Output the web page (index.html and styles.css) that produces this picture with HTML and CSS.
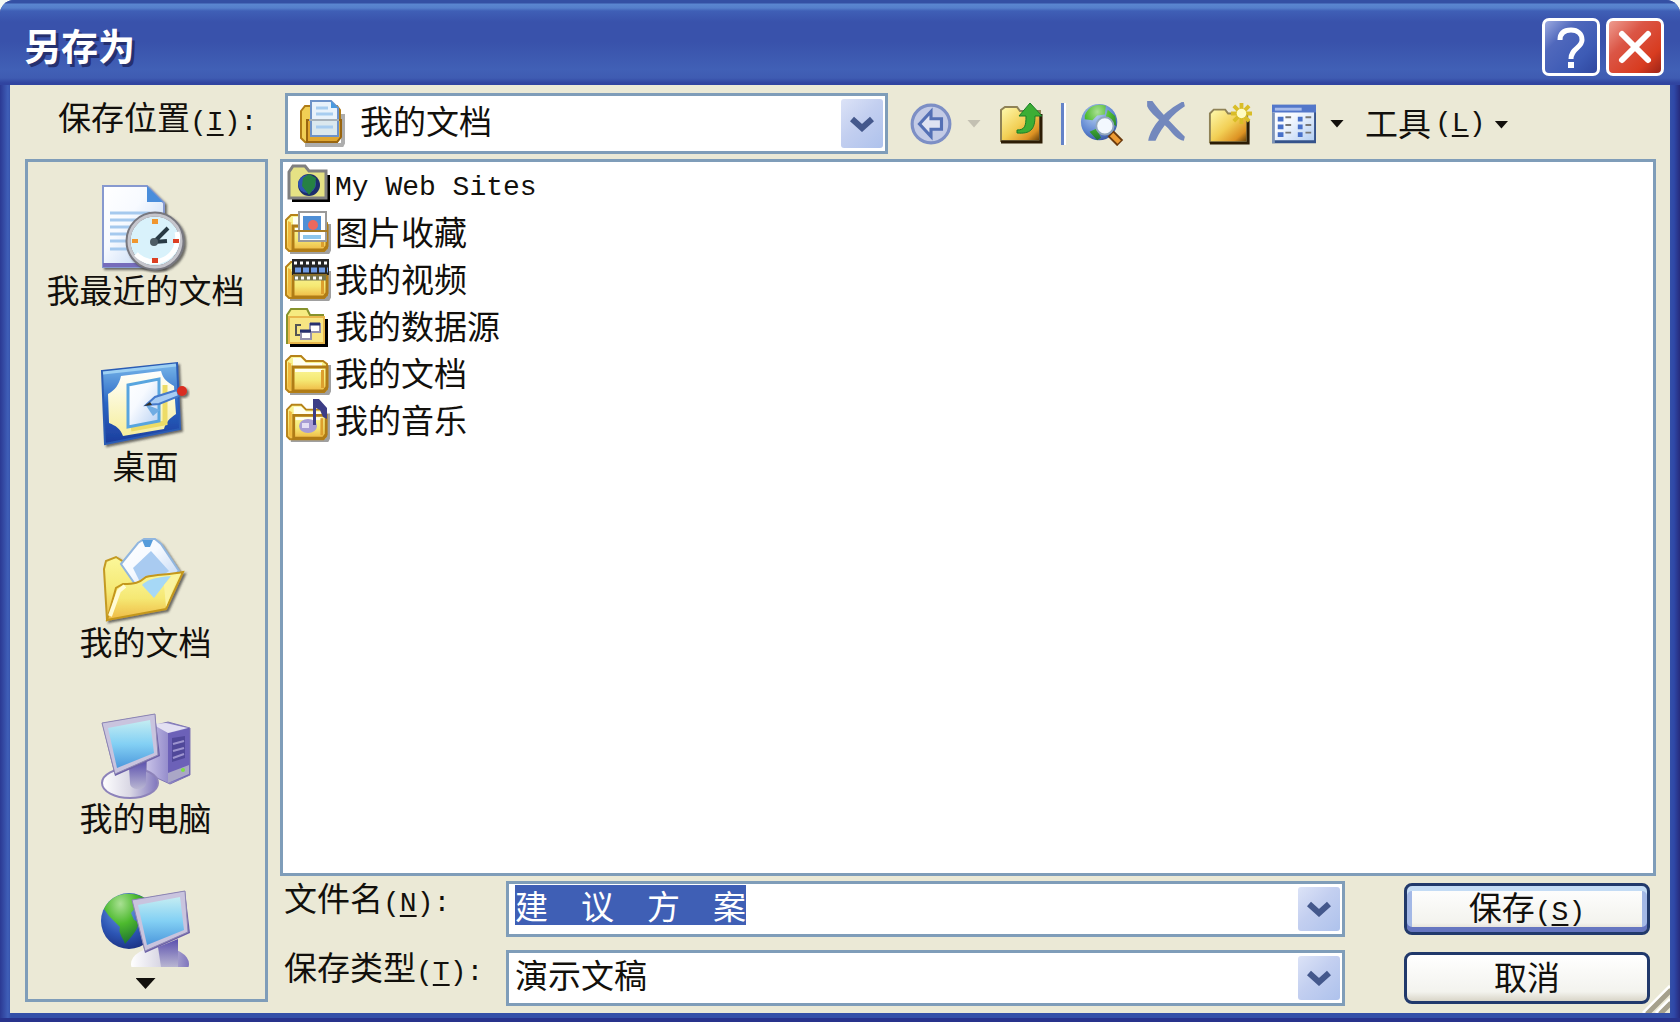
FILE: index.html
```html
<!DOCTYPE html>
<html lang="zh-CN">
<head>
    <meta charset="UTF-8">
    <meta name="viewport" content="width=device-width, initial-scale=1.0">
    <title>另存为</title>
    <link rel="stylesheet" href="styles.css">
</head>
<body>
    <!-- shared gradients and folder shapes -->
    <svg class="defs" aria-hidden="true">
        <defs>
            <linearGradient id="gold" x1="0" y1="0" x2="0" y2="1">
                <stop offset="0" stop-color="#fbf79a"/>
                <stop offset=".55" stop-color="#f5e873"/>
                <stop offset="1" stop-color="#efb944"/>
            </linearGradient>
            <linearGradient id="goldDark" x1="0" y1="0" x2="1" y2="1">
                <stop offset="0" stop-color="#fffbb0"/>
                <stop offset=".5" stop-color="#f2cf55"/>
                <stop offset=".8" stop-color="#dd9223"/>
                <stop offset="1" stop-color="#5c3a08"/>
            </linearGradient>
            <linearGradient id="screen" x1="0" y1="0" x2="0" y2="1">
                <stop offset="0" stop-color="#c4edf2"/>
                <stop offset=".5" stop-color="#83d0f4"/>
                <stop offset="1" stop-color="#4c98dc"/>
            </linearGradient>
            <linearGradient id="paper" x1="0" y1="0" x2="1" y2="1">
                <stop offset="0" stop-color="#ffffff"/>
                <stop offset=".4" stop-color="#f7faff"/>
                <stop offset="1" stop-color="#b5cff2"/>
            </linearGradient>
            <linearGradient id="violet" x1="0" y1="0" x2="1" y2="0">
                <stop offset="0" stop-color="#c9c3e8"/>
                <stop offset="1" stop-color="#6258b0"/>
            </linearGradient>
            <linearGradient id="neck" x1="0" y1="0" x2="0" y2="1">
                <stop offset="0" stop-color="#5a4fae"/>
                <stop offset="1" stop-color="#b9b6d2"/>
            </linearGradient>
            <linearGradient id="base" x1="0" y1="0" x2="1" y2="0">
                <stop offset="0" stop-color="#ffffff"/>
                <stop offset=".5" stop-color="#d9d7e4"/>
                <stop offset="1" stop-color="#7f75bd"/>
            </linearGradient>
            <radialGradient id="sea" cx=".4" cy=".3" r=".75">
                <stop offset="0" stop-color="#6f9fe4"/>
                <stop offset=".6" stop-color="#2c55b4"/>
                <stop offset="1" stop-color="#1b2f80"/>
            </radialGradient>
            <radialGradient id="seaLight" cx=".4" cy=".3" r=".75">
                <stop offset="0" stop-color="#b4cdf0"/>
                <stop offset=".7" stop-color="#5a82cf"/>
                <stop offset="1" stop-color="#3a559c"/>
            </radialGradient>
            <radialGradient id="land" cx=".4" cy=".2" r=".8">
                <stop offset="0" stop-color="#a9e093"/>
                <stop offset=".5" stop-color="#4dba2e"/>
                <stop offset="1" stop-color="#1f7431"/>
            </radialGradient>
            <linearGradient id="board" x1="0" y1="0" x2="0" y2="1">
                <stop offset="0" stop-color="#78b7ea"/>
                <stop offset=".5" stop-color="#2a66c4"/>
                <stop offset="1" stop-color="#1c3c9c"/>
            </linearGradient>
            <linearGradient id="cream" x1="0" y1="0" x2="0" y2="1">
                <stop offset="0" stop-color="#ffffff"/>
                <stop offset="1" stop-color="#f6ee9c"/>
            </linearGradient>
            <filter id="shadow" x="-20%" y="-20%" width="150%" height="150%">
                <feDropShadow dx="2" dy="2" stdDeviation="1" flood-color="#333" flood-opacity=".7"/>
            </filter>
            <symbol id="folder" viewBox="0 0 46 44">
                <path d="M5 41h38l1-2V13" fill="none" stroke="#777" stroke-width="4" opacity=".7"/>
                <path d="M1 9l5-5h10l5 5h17l4 3v25l-3 3H4l-3-3z" fill="url(#gold)" stroke="#b68219" stroke-width="2"/>
                <path d="M3 10v25l3 3V12h1" fill="#f0b93f"/>
                <path d="M8 6h8l5 5h16v3H8z" fill="#fffff0"/>
                <path d="M8 15h34v20l-3 4H8z" fill="url(#gold)" stroke="#b07c16" stroke-width="3"/>
                <path d="M10 17h27v3H10z" fill="#fffff0"/>
                <path d="M36 18h3v18h-3z" fill="#dd9f2e"/>
            </symbol>
            <symbol id="monitor" viewBox="0 0 60 66">
                <path d="M1 11L54 2l5 42-45 20z" fill="#6b60a8"/>
                <path d="M1 11L54 2l3 41-43 19z" fill="#c9c4de" stroke="#8d86b4"/>
                <path d="M7 16l42-8 4 33-37 15z" fill="url(#screen)"/>
            </symbol>
        </defs>
    </svg>

    <div class="window">
        <header class="titlebar">
            <h1>另存为</h1>
            <button class="caption-btn help" aria-label="帮助">
                <svg viewBox="0 0 58 58">
                    <path d="M18 22c0-7 4-10 11-10s11 4 11 10c0 8-11 8-11 19" fill="none" stroke="#fff" stroke-width="5"/>
                    <path d="M26 44h6v6h-6z" fill="#fff"/>
                </svg>
            </button>
            <button class="caption-btn close" aria-label="关闭">
                <svg viewBox="0 0 58 58"><path d="M16 16l26 26M42 16L16 42" stroke="#fff" stroke-width="6" stroke-linecap="round"/></svg>
            </button>
        </header>

        <main class="dialog">
            <div class="toolbar">
                <label for="place" class="place-label">保存位置<span class="key">(<u>I</u>):</span></label>
                <div class="combo place">
                    <svg class="place-icon" viewBox="0 0 46 48">
                        <path d="M6 45h37l1-2V14" fill="none" stroke="#777" stroke-width="4" opacity=".6"/>
                        <path d="M2 11l4-5h32l3 4v28l-3 4H6l-4-4z" fill="#f1cf55" stroke="#b07c16" stroke-width="2"/>
                        <path d="M8 20h34v17l-4 5H8z" fill="#e0a730" stroke="#99650f" stroke-width="2"/>
                        <path d="M12 1h20l7 7v28H12z" fill="#e9f2fb" stroke="#6e92c8" stroke-width="2"/>
                        <path d="M32 1v7h7z" fill="#4a9be0"/>
                        <path d="M13 21h25v14H13z" fill="#dbe8ee"/>
                        <path d="M17 8h12M17 14h17M17 27h17" stroke="#a8cdf0" stroke-width="3"/>
                        <path d="M10 20h30" stroke="#a6b0b8" stroke-width="2"/>
                    </svg>
                    <select id="place"><option>我的文档</option></select>
                    <span class="drop"><svg viewBox="0 0 24 16"><path d="M2 3l10 9 10-9" /></svg></span>
                </div>
                <div class="tools">
                    <button class="tool back" aria-label="返回">
                        <svg viewBox="0 0 40 42">
                            <circle cx="20" cy="21" r="18" fill="#c3cbe6" stroke="#7d8fc5" stroke-width="3"/>
                            <path d="M9 21l11-12v7h10v10H20v7z" fill="#dfe3f2" stroke="#5470b5" stroke-width="3"/>
                        </svg>
                    </button>
                    <button class="arrow off" aria-label="返回列表"></button>
                    <button class="tool up" aria-label="向上一级">
                        <svg viewBox="0 0 44 42">
                            <path d="M2 39V8l4-3h12l3 4h20v30z" fill="url(#goldDark)" stroke="#8f8256" stroke-width="2"/>
                            <path d="M2 40h40V12" fill="none" stroke="#2c1d05" stroke-width="3"/>
                            <path d="M18 28c8 0 9-4 9-14h-7L31 1l12 13h-7c0 14-5 18-18 17z" fill="#3cae35" stroke="#187d28" stroke-width="1"/>
                        </svg>
                    </button>
                    <span class="separator"></span>
                    <button class="tool search" aria-label="搜索 Web">
                        <svg viewBox="0 0 46 46">
                            <circle cx="20" cy="21" r="19" fill="url(#seaLight)"/>
                            <path d="M5 14C9 4 18 1 27 4l-1 9-8 1-5 5-8-1zM29 8l8 7 1 10-8-3-3-7zM10 31l7-3 5 9-4 3z" fill="url(#land)"/>
                            <path d="M32 33l10 10" stroke="#6c3b0e" stroke-width="9"/>
                            <path d="M33 34l8 8" stroke="#ee9b33" stroke-width="5"/>
                            <circle cx="26" cy="25" r="9" fill="#f3f8fe" stroke="#91a6bd" stroke-width="2"/>
                        </svg>
                    </button>
                    <button class="tool delete" aria-label="删除">
                        <svg viewBox="0 0 38 42"><path d="M1 1h5c7 10 19 22 31 34l-1 4c-6-1-10-6-15-12C13 19 4 13 1 6zM36 2l1 4C26 13 16 24 9 39H2C5 24 19 10 34 2z" fill="#7388bd"/></svg>
                    </button>
                    <button class="tool new" aria-label="新建文件夹">
                        <svg viewBox="0 0 46 44">
                            <path d="M2 41V11l4-4h12l3 4h20v30z" fill="url(#goldDark)" stroke="#8f8256" stroke-width="2"/>
                            <path d="M2 42h40V18" fill="none" stroke="#2c1d05" stroke-width="3"/>
                            <path d="M35 0v22M24 11h22M27 3l16 16M43 3L27 19" stroke="#d9bd27" stroke-width="4"/>
                            <circle cx="35" cy="11" r="5" fill="#fffcc0"/>
                        </svg>
                    </button>
                    <button class="tool views" aria-label="视图">
                        <svg viewBox="0 0 46 42">
                            <path d="M0 1h46v40H0z" fill="#35538b"/>
                            <path d="M0 1h44v37H2z" fill="url(#paper)"/>
                            <path d="M0 1h46v8H0z" fill="#5377ca"/>
                            <path d="M3 4h28v3H3z" fill="#a9bdeb"/>
                            <path d="M0 9h3v32H0z" fill="#7f95b8"/>
                            <path d="M6 16h6M6 24h6M6 32h6M27 16h5M27 24h5M27 32h5" stroke="#4871c9" stroke-width="5"/>
                            <path d="M14 14h6M14 22h6M14 30h6M35 14h6M35 22h6M35 30h6" stroke="#777" stroke-width="2"/>
                        </svg>
                    </button>
                    <button class="arrow" aria-label="视图列表"></button>
                    <button class="tools-menu">工具<span class="key">(<u>L</u>)</span><span class="arrow"></span></button>
                </div>
            </div>

            <div class="columns">
                <nav class="places">
                    <a href="#recent" class="spot">
                        <svg viewBox="0 0 92 90">
                            <g filter="url(#shadow)">
                                <path d="M3 3h44l17 17v64H3z" fill="url(#paper)" stroke="#8799cf" stroke-width="2"/>
                                <path d="M3 82h60" stroke="#766cbb" stroke-width="4"/>
                                <path d="M47 3v16h16z" fill="#4a8ddb"/>
                                <path d="M10 30h40M10 37h34M10 44h30M10 51h30M10 58h30M10 66h30" stroke="#a5c9ee" stroke-width="3"/>
                            </g>
                            <circle cx="55" cy="58" r="27" fill="#d9f2fb" stroke="#77777f" stroke-width="5" filter="url(#shadow)"/>
                            <circle cx="55" cy="58" r="26" fill="none" stroke="#c5c5cc" stroke-width="3"/>
                            <path d="M36 71a24 24 0 0 0 41-22" fill="none" stroke="#fff" stroke-width="5"/>
                            <path d="M54 59l14-14M54 59l13-1" stroke="#283a44" stroke-width="4"/>
                            <path d="M52 36h6v5h-6zM32 56h6v4h-6z" fill="#f0962e"/>
                            <path d="M52 75h6v5h-6zM73 56h6v4h-6z" fill="#dc3f22"/>
                            <circle cx="54" cy="59" r="4" fill="#4d5c64"/>
                        </svg>
                        <span>我最近的文档</span>
                    </a>
                    <a href="#desktop" class="spot">
                        <svg viewBox="0 0 92 90">
                            <path d="M2 12L77 4l3 66L5 85z" fill="url(#board)" stroke="#2a5cb4" stroke-width="2" filter="url(#shadow)"/>
                            <path d="M3 14l73-8" stroke="#9dd0f3" stroke-width="3"/>
                            <path d="M21 17l40-5c2 8 6 11 13 15l2 28c-7 5-10 8-12 15l-41 7c-3-8-7-10-14-13l-1-29c7-4 11-9 13-18z" fill="url(#cream)"/>
                            <path d="M31 70l34-6V26" fill="none" stroke="#eddc67" stroke-width="5"/>
                            <path d="M28 26l31-6v42l-31 6z" fill="url(#paper)" stroke="#58a5df" stroke-width="3"/>
                            <path d="M45 45l15 6-7 6z" fill="#70ace3"/>
                            <path d="M46 46l9-8 22-7 2 6-20 8z" fill="#a9cdf3" stroke="#4479cb" stroke-width="2"/>
                            <path d="M44 47l6-4 2 3z" fill="#332f22"/>
                            <circle cx="82" cy="32" r="5" fill="#d92f20" filter="url(#shadow)"/>
                        </svg>
                        <span>桌面</span>
                    </a>
                    <a href="#documents" class="spot">
                        <svg viewBox="0 0 92 90">
                            <g filter="url(#shadow)">
                                <path d="M4 34l2-8 10-4 8 5 52 16-60 36-9 6z" fill="url(#gold)" stroke="#c49a24" stroke-width="2"/>
                                <path d="M21 29L38 8l6-4h11l6 5 18 27-28 24-14-8z" fill="url(#paper)" stroke="#91b6df" stroke-width="2"/>
                                <path d="M33 33l18-17 18 20-18 13H41z" fill="#a9cbf1"/>
                                <path d="M42 5h11l-3 7h-5z" fill="#569cdb"/>
                                <path d="M7 85l9-32 7-4c12 0 16-1 23-7 10-3 22-2 37-5L66 74z" fill="url(#gold)" stroke="#c4971d" stroke-width="2"/>
                                <path d="M10 81l9-25 6-5" fill="none" stroke="#fffbd4" stroke-width="4"/>
                            </g>
                            <path d="M42 50c4-5 14-8 29-9L54 63z" fill="#a6d8f6"/>
                            <path d="M64 50l2 22 13-33-8 3z" fill="#faf3a0"/>
                        </svg>
                        <span>我的文档</span>
                    </a>
                    <a href="#computer" class="spot">
                        <svg viewBox="0 0 92 90">
                            <path d="M48 16l20-5 22 6v47L70 73 46 62z" fill="url(#violet)" stroke="#8279b4"/>
                            <path d="M68 22l21-4v46l-21 8z" fill="#6c61b8"/>
                            <path d="M52 13l14-1 22 5-20 5z" fill="#e3e0f2"/>
                            <path d="M72 27l13-2v22l-13 4z" fill="#50489a"/>
                            <path d="M73 33l11-3M73 40l11-3M73 47l11-4" stroke="#9d94cf" stroke-width="2"/>
                            <path d="M68 62l21-8v9l-21 9z" fill="#aaa7c6"/>
                            <circle cx="83" cy="59" r="2" fill="#7ee043"/>
                            <ellipse cx="30" cy="72" rx="28" ry="15" fill="url(#base)" stroke="#8d83ba" stroke-width="2"/>
                            <path d="M29 56l17-6v22c0 8-16 8-16 0z" fill="url(#neck)"/>
                            <use href="#monitor" x="1" y="1" width="60" height="66"/>
                        </svg>
                        <span>我的电脑</span>
                    </a>
                    <a href="#network" class="spot cut">
                        <svg viewBox="0 0 92 80">
                            <circle cx="29" cy="34" r="28" fill="url(#sea)"/>
                            <path d="M4 22C10 8 28 2 45 11l-9 9-5 6 3 7c8 3 3 11-9 24-2-7-7-10-5-17L9 29z" fill="url(#land)"/>
                            <ellipse cx="60" cy="77" rx="29" ry="17" fill="url(#base)"/>
                            <path d="M58 60l20-8v28H61z" fill="url(#neck)"/>
                            <use href="#monitor" x="31" y="2" width="60" height="66"/>
                        </svg>
                    </a>
                    <button class="more" aria-label="更多"></button>
                </nav>

                <section class="content">
                    <ul class="files">
                        <li><a href="#web">
                            <svg viewBox="0 0 46 44">
                                <path d="M7 36h36V11" fill="none" stroke="#000" stroke-width="4"/>
                                <path d="M4 8l4-6h12l4 5h17v27H4z" fill="#e5e284" stroke="#808080" stroke-width="3"/>
                                <circle cx="24" cy="21" r="11" fill="#1d2d6d"/>
                                <circle cx="22" cy="20" r="9" fill="#2f55b0"/>
                                <path d="M18 14l6-4 7 4-1 9-6 8-7-9z" fill="#268143"/>
                            </svg>
                            <span class="latin">My Web Sites</span>
                        </a></li>
                        <li><a href="#pictures">
                            <svg viewBox="0 0 46 44">
                                <use href="#folder" width="46" height="44"/>
                                <path d="M14 1h27v29H14z" fill="#fff" stroke="#9a9a9a" stroke-width="2"/>
                                <path d="M18 5h18v15H18z" fill="#4f8fd6"/>
                                <circle cx="28" cy="14" r="5" fill="#ed685d"/>
                                <path d="M18 24h18v4H18z" fill="#8dc6ed"/>
                                <path d="M8 20h34" stroke="#a77c27" stroke-width="2"/>
                            </svg>
                            <span>图片收藏</span>
                        </a></li>
                        <li><a href="#videos">
                            <svg viewBox="0 0 46 44">
                                <use href="#folder" width="46" height="44"/>
                                <path d="M7 1h37v16H7z" fill="#252525"/>
                                <path d="M9 5h34" stroke="#fff" stroke-width="3" stroke-dasharray="3 3"/>
                                <path d="M10 12h33" stroke="#6f9be4" stroke-width="5" stroke-dasharray="6 2"/>
                                <path d="M8 17h34" stroke="#8d6f26" stroke-width="2"/>
                                <path d="M9 20h32" stroke="#777650" stroke-width="5"/>
                                <path d="M10 20h30" stroke="#fff" stroke-width="3" stroke-dasharray="3 3"/>
                            </svg>
                            <span>我的视频</span>
                        </a></li>
                        <li><a href="#sources">
                            <svg viewBox="0 0 46 44">
                                <path d="M5 40h36V14" fill="none" stroke="#000" stroke-width="4"/>
                                <path d="M2 10l4-6h16l3 6h13v28H2z" fill="#f6eb80" stroke="#86922c" stroke-width="2"/>
                                <path d="M4 12h35v26H4z" fill="#f7e583" stroke="#e8b74c" stroke-width="2"/>
                                <path d="M16 20h-5v10h5M17 27h9v-6" fill="none" stroke="#555" stroke-width="2"/>
                                <path d="M16 27h10v7H16zM25 19h10v8H25z" fill="#fff" stroke="#9290ad" stroke-width="2"/>
                                <path d="M15 26h11M25 19h10" stroke="#26306f" stroke-width="3"/>
                            </svg>
                            <span>我的数据源</span>
                        </a></li>
                        <li><a href="#docs">
                            <svg viewBox="0 0 46 44"><use href="#folder" width="46" height="44"/></svg>
                            <span>我的文档</span>
                        </a></li>
                        <li><a href="#music">
                            <svg viewBox="0 0 46 44">
                                <use href="#folder" y="2" width="46" height="42"/>
                                <ellipse cx="23" cy="27" rx="9" ry="7" fill="#a79dd4"/>
                                <path d="M17 24h7v5h-7z" fill="#e4dff4"/>
                                <path d="M28 26V0h6l8 9v11l-4-2-3-7-4-2v17z" fill="#3c3d86"/>
                            </svg>
                            <span>我的音乐</span>
                        </a></li>
                    </ul>

                    <form class="fields">
                        <label for="filename">文件名<span class="key">(<u>N</u>):</span></label>
                        <div class="combo">
                            <input id="filename" type="text" value="建　议　方　案" autocomplete="off">
                            <button type="button" class="drop" aria-label="文件名列表"><svg viewBox="0 0 24 16"><path d="M2 3l10 9 10-9"/></svg></button>
                        </div>
                        <button type="button" class="btn save">保存<span class="key">(<u>S</u>)</span></button>

                        <label for="filetype">保存类型<span class="key">(<u>T</u>):</span></label>
                        <div class="combo">
                            <select id="filetype"><option>演示文稿</option></select>
                            <span class="drop"><svg viewBox="0 0 24 16"><path d="M2 3l10 9 10-9"/></svg></span>
                        </div>
                        <button type="button" class="btn">取消</button>
                    </form>
                </section>
            </div>
            <svg class="grip" viewBox="0 0 28 28">
                <path d="M1 28L28 1M14 28l14-14" stroke="#fff" stroke-width="3"/>
                <path d="M5 29L29 5M18 29l11-11" stroke="#a5a08c" stroke-width="5"/>
            </svg>
        </main>
    </div>
    <script>
        const filename = document.querySelector('#filename');
        filename.focus();
        filename.select();
    </script>
</body>
</html>
```

FILE: styles.css
```css
* {
    box-sizing: border-box;
}

body {
    margin: 0;
    background-color: #f4faf4;
    color: #12100c;
    font-family: "Noto Sans CJK SC", sans-serif;
    font-size: 33px;
    line-height: 40px;
}

button, input, select {
    margin: 0;
    border: 0;
    padding: 0;
    background: none;
    color: inherit;
    font: inherit;
}

a {
    color: inherit;
    text-decoration: none;
}

svg {
    display: block;
}

.defs {
    position: absolute;
    width: 0;
    height: 0;
}

.window {
    display: flex;
    flex-direction: column;
    min-height: 100vh;
    padding: 0 10px 9px;
    border-radius: 14px 14px 0 0;
    background: linear-gradient(90deg, #2b3993 0, #3f5fb8 8px, #3450a8 11px, #3450a8 calc(100% - 10px), #2f48a8 calc(100% - 6px), #262b7c 100%);
    box-shadow: inset 0 -4px #28338c;
}

/* title bar */
.titlebar {
    display: flex;
    align-items: center;
    gap: 6px;
    height: 85px;
    margin: 0 -10px;
    padding: 9px 16px 0 24px;
    border-radius: 14px 14px 0 0;
    background: linear-gradient(#3450a4 0, #3450a4 3px, #5a86d0 4px, #557fcb 8px, #3f5fb6 11px, #3952ab 22px, #3952ab 42px, #4160b6 70px, #3f5cb2 78px, #3044a0 83px, #3044a0 100%);
}

h1 {
    flex: 1;
    margin: 0;
    padding-bottom: 4px;
    color: #fff;
    font-size: 37px;
    font-weight: bold;
    text-shadow: 3px 3px #25306f;
}

.caption-btn {
    width: 58px;
    height: 58px;
    border: 3px solid #fff;
    border-radius: 7px;
    background: linear-gradient(135deg, #9caae0 0, #5068bc 30%, #3d5bb5 70%, #2f479f 100%);
}

.caption-btn svg {
    margin: -3px;
}

.close {
    background: linear-gradient(135deg, #ee9c90 0, #db5646 35%, #d83c20 75%, #9c2418 100%);
}

/* dialog area */
.dialog {
    position: relative;
    flex: 1;
    display: flex;
    flex-direction: column;
    gap: 5px;
    padding: 8px 14px 7px 15px;
    background-color: #ebe9d6;
}

.key {
    font-family: "Liberation Mono", monospace;
    font-size: 28px;
}

.key u {
    text-underline-offset: 4px;
}

.toolbar {
    display: flex;
    align-items: center;
}

.place-label {
    width: 260px;
    padding: 0 0 8px 33px;
    white-space: nowrap;
}

.combo {
    position: relative;
    display: flex;
    align-items: center;
    border: 3px solid #7f9db9;
    background-color: #fff;
}

.combo select,
.combo input {
    flex: 1;
    align-self: stretch;
    min-width: 0;
    padding: 0 50px 8px 6px;
    outline: none;
    appearance: none;
}

.combo input {
    padding-right: 6px;
}

.combo input::selection {
    background-color: #3f5fb5;
    color: #fff;
}

.combo .drop {
    display: flex;
    align-items: center;
    justify-content: center;
    align-self: stretch;
    width: 42px;
    margin: 3px 2px;
    border-radius: 3px;
    background: linear-gradient(135deg, #dce3f7 0, #c3cff0 45%, #aec2ec 100%);
}

/* the select runs under its arrow so the whole box stays clickable */
.combo span.drop {
    position: absolute;
    top: 0;
    right: 0;
    bottom: 0;
    pointer-events: none;
}

.drop svg {
    width: 24px;
    height: 16px;
    fill: none;
    stroke: #44588c;
    stroke-width: 6;
}

.place {
    width: 603px;
    height: 61px;
}

.place-icon {
    width: 46px;
    height: 48px;
    margin-left: 11px;
}

.place select {
    padding-left: 15px;
}

.tools {
    display: flex;
    align-items: center;
    padding-left: 21px;
}

.tool svg {
    width: 44px;
    height: 44px;
}

.arrow {
    width: 14px;
    height: 8px;
    background-color: #12100c;
    clip-path: polygon(0 0, 100% 0, 50% 100%);
}

.back + .arrow {
    margin: 0 18px 0 14px;
}

.off {
    background-color: #c3c0b2;
}

.up {
    margin-top: -2px;
}

.separator {
    width: 5px;
    height: 42px;
    margin: 0 14px 0 18px;
    border-left: 3px solid #6483c8;
    background-color: #fff;
}

.search {
    margin-right: 20px;
}

.delete {
    margin: -4px 20px 0 0;
}

.new {
    margin-right: 20px;
}

.views {
    margin-right: 14px;
}

.tools-menu {
    display: flex;
    align-items: center;
    margin: -4px 0 0 21px;
    white-space: nowrap;
}

.tools-menu .key {
    padding: 4px 0 0 4px;
}

.tools-menu .arrow {
    margin: 6px 0 0 9px;
}

.columns {
    flex: 1;
    display: flex;
    gap: 12px;
}

/* places bar */
.places {
    display: flex;
    flex-direction: column;
    align-items: center;
    width: 243px;
    margin-bottom: 4px;
    padding: 21px 2px 10px 0;
    border: 3px solid #7f9db9;
}

.spot {
    display: flex;
    flex-direction: column;
    align-items: center;
    height: 176px;
    white-space: nowrap;
}

.spot svg {
    width: 92px;
    height: 90px;
}

.spot span {
    margin-top: -4px;
}

.cut {
    height: 80px;
}

.cut svg {
    height: 80px;
}

.more {
    width: 20px;
    height: 11px;
    margin-top: auto;
    background-color: #12100c;
    clip-path: polygon(0 0, 100% 0, 50% 100%);
}

/* file list and fields */
.content {
    flex: 1;
    display: flex;
    flex-direction: column;
    gap: 5px;
}

.files {
    flex: 1;
    margin: 0;
    padding: 0 2px;
    border: 3px solid #7f9db9;
    background-color: #fff;
    list-style: none;
}

.files a {
    display: flex;
    align-items: center;
    gap: 4px;
    height: 47px;
}

.files svg {
    width: 46px;
    height: 44px;
}

.files span {
    padding-bottom: 3px;
}

.files .latin {
    padding: 4px 0 0;
    font-family: "Liberation Mono", monospace;
    font-size: 28px;
}

.fields {
    display: grid;
    grid-template-columns: 222px 1fr 246px;
    grid-auto-rows: 56px;
    row-gap: 13px;
    margin: 0;
    padding: 0 6px 0 4px;
}

.fields label {
    margin-top: -4px;
    white-space: nowrap;
}

.fields .btn {
    margin: 2px 0;
    padding-bottom: 5px;
}

.fields .combo {
    margin-right: 59px;
}

.btn {
    border: 3px solid #21396b;
    border-radius: 8px;
    background: linear-gradient(#fff, #f3f3ee 80%, #d9d5c8);
}

.save {
    box-shadow: inset 0 5px #c4dcf5, inset 0 -5px #6676c0, inset 5px 0 #a3b8e6, inset -5px 0 #a3b8e6;
}

.grip {
    position: absolute;
    right: 0;
    bottom: 0;
    width: 28px;
    height: 28px;
}
```
